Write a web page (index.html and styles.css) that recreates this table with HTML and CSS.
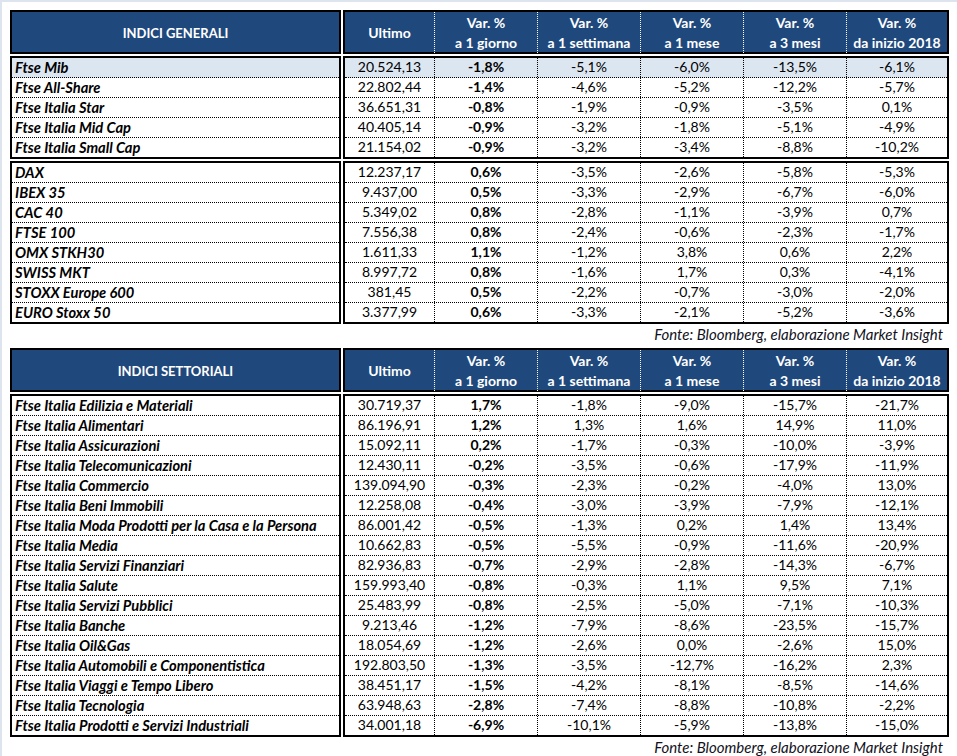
FILE: index.html
```html
<!DOCTYPE html>
<html lang="it">
<head>
<meta charset="utf-8">
<title>Indici</title>
<link rel="stylesheet" href="styles.css">
</head>
<body>
<div class="page">
  <section class="tbl">
    <div class="band hdr">
      <div class="box lab-h">INDICI GENERALI</div>
      <div class="box dat-h">
        <div class="hc one">Ultimo</div>
        <div class="hc">Var. %<br>a 1 giorno</div>
        <div class="hc">Var. %<br>a 1 settimana</div>
        <div class="hc">Var. %<br>a 1 mese</div>
        <div class="hc">Var. %<br>a 3 mesi</div>
        <div class="hc">Var. %<br>da inizio 2018</div>
      </div>
    </div>
    <div class="band">
      <div class="box lab">
        <div class="l hi">Ftse Mib</div>
        <div class="l">Ftse All-Share</div>
        <div class="l">Ftse Italia Star</div>
        <div class="l">Ftse Italia Mid Cap</div>
        <div class="l">Ftse Italia Small Cap</div>
      </div>
      <div class="box dat">
        <div class="r hi"><span>20.524,13</span><b>-1,8%</b><span>-5,1%</span><span>-6,0%</span><span>-13,5%</span><span>-6,1%</span></div>
        <div class="r"><span>22.802,44</span><b>-1,4%</b><span>-4,6%</span><span>-5,2%</span><span>-12,2%</span><span>-5,7%</span></div>
        <div class="r"><span>36.651,31</span><b>-0,8%</b><span>-1,9%</span><span>-0,9%</span><span>-3,5%</span><span>0,1%</span></div>
        <div class="r"><span>40.405,14</span><b>-0,9%</b><span>-3,2%</span><span>-1,8%</span><span>-5,1%</span><span>-4,9%</span></div>
        <div class="r"><span>21.154,02</span><b>-0,9%</b><span>-3,2%</span><span>-3,4%</span><span>-8,8%</span><span>-10,2%</span></div>
      </div>
    </div>
    <div class="band">
      <div class="box lab">
        <div class="l">DAX</div>
        <div class="l">IBEX 35</div>
        <div class="l">CAC 40</div>
        <div class="l">FTSE 100</div>
        <div class="l">OMX STKH30</div>
        <div class="l">SWISS MKT</div>
        <div class="l">STOXX Europe 600</div>
        <div class="l">EURO Stoxx 50</div>
      </div>
      <div class="box dat">
        <div class="r"><span>12.237,17</span><b>0,6%</b><span>-3,5%</span><span>-2,6%</span><span>-5,8%</span><span>-5,3%</span></div>
        <div class="r"><span>9.437,00</span><b>0,5%</b><span>-3,3%</span><span>-2,9%</span><span>-6,7%</span><span>-6,0%</span></div>
        <div class="r"><span>5.349,02</span><b>0,8%</b><span>-2,8%</span><span>-1,1%</span><span>-3,9%</span><span>0,7%</span></div>
        <div class="r"><span>7.556,38</span><b>0,8%</b><span>-2,4%</span><span>-0,6%</span><span>-2,3%</span><span>-1,7%</span></div>
        <div class="r"><span>1.611,33</span><b>1,1%</b><span>-1,2%</span><span>3,8%</span><span>0,6%</span><span>2,2%</span></div>
        <div class="r"><span>8.997,72</span><b>0,8%</b><span>-1,6%</span><span>1,7%</span><span>0,3%</span><span>-4,1%</span></div>
        <div class="r"><span>381,45</span><b>0,5%</b><span>-2,2%</span><span>-0,7%</span><span>-3,0%</span><span>-2,0%</span></div>
        <div class="r"><span>3.377,99</span><b>0,6%</b><span>-3,3%</span><span>-2,1%</span><span>-5,2%</span><span>-3,6%</span></div>
      </div>
    </div>
    <div class="fonte">Fonte: Bloomberg, elaborazione Market Insight</div>
  </section>

  <section class="tbl">
    <div class="band hdr">
      <div class="box lab-h">INDICI SETTORIALI</div>
      <div class="box dat-h">
        <div class="hc one">Ultimo</div>
        <div class="hc">Var. %<br>a 1 giorno</div>
        <div class="hc">Var. %<br>a 1 settimana</div>
        <div class="hc">Var. %<br>a 1 mese</div>
        <div class="hc">Var. %<br>a 3 mesi</div>
        <div class="hc">Var. %<br>da inizio 2018</div>
      </div>
    </div>
    <div class="band">
      <div class="box lab">
        <div class="l">Ftse Italia Edilizia e Materiali</div>
        <div class="l">Ftse Italia Alimentari</div>
        <div class="l">Ftse Italia Assicurazioni</div>
        <div class="l">Ftse Italia Telecomunicazioni</div>
        <div class="l">Ftse Italia Commercio</div>
        <div class="l">Ftse Italia Beni Immobili</div>
        <div class="l">Ftse Italia Moda Prodotti per la Casa e la Persona</div>
        <div class="l">Ftse Italia Media</div>
        <div class="l">Ftse Italia Servizi Finanziari</div>
        <div class="l">Ftse Italia Salute</div>
        <div class="l">Ftse Italia Servizi Pubblici</div>
        <div class="l">Ftse Italia Banche</div>
        <div class="l">Ftse Italia Oil&amp;Gas</div>
        <div class="l">Ftse Italia Automobili e Componentistica</div>
        <div class="l">Ftse Italia Viaggi e Tempo Libero</div>
        <div class="l">Ftse Italia Tecnologia</div>
        <div class="l">Ftse Italia Prodotti e Servizi Industriali</div>
      </div>
      <div class="box dat">
        <div class="r"><span>30.719,37</span><b>1,7%</b><span>-1,8%</span><span>-9,0%</span><span>-15,7%</span><span>-21,7%</span></div>
        <div class="r"><span>86.196,91</span><b>1,2%</b><span>1,3%</span><span>1,6%</span><span>14,9%</span><span>11,0%</span></div>
        <div class="r"><span>15.092,11</span><b>0,2%</b><span>-1,7%</span><span>-0,3%</span><span>-10,0%</span><span>-3,9%</span></div>
        <div class="r"><span>12.430,11</span><b>-0,2%</b><span>-3,5%</span><span>-0,6%</span><span>-17,9%</span><span>-11,9%</span></div>
        <div class="r"><span>139.094,90</span><b>-0,3%</b><span>-2,3%</span><span>-0,2%</span><span>-4,0%</span><span>13,0%</span></div>
        <div class="r"><span>12.258,08</span><b>-0,4%</b><span>-3,0%</span><span>-3,9%</span><span>-7,9%</span><span>-12,1%</span></div>
        <div class="r"><span>86.001,42</span><b>-0,5%</b><span>-1,3%</span><span>0,2%</span><span>1,4%</span><span>13,4%</span></div>
        <div class="r"><span>10.662,83</span><b>-0,5%</b><span>-5,5%</span><span>-0,9%</span><span>-11,6%</span><span>-20,9%</span></div>
        <div class="r"><span>82.936,83</span><b>-0,7%</b><span>-2,9%</span><span>-2,8%</span><span>-14,3%</span><span>-6,7%</span></div>
        <div class="r"><span>159.993,40</span><b>-0,8%</b><span>-0,3%</span><span>1,1%</span><span>9,5%</span><span>7,1%</span></div>
        <div class="r"><span>25.483,99</span><b>-0,8%</b><span>-2,5%</span><span>-5,0%</span><span>-7,1%</span><span>-10,3%</span></div>
        <div class="r"><span>9.213,46</span><b>-1,2%</b><span>-7,9%</span><span>-8,6%</span><span>-23,5%</span><span>-15,7%</span></div>
        <div class="r"><span>18.054,69</span><b>-1,2%</b><span>-2,6%</span><span>0,0%</span><span>-2,6%</span><span>15,0%</span></div>
        <div class="r"><span>192.803,50</span><b>-1,3%</b><span>-3,5%</span><span>-12,7%</span><span>-16,2%</span><span>2,3%</span></div>
        <div class="r"><span>38.451,17</span><b>-1,5%</b><span>-4,2%</span><span>-8,1%</span><span>-8,5%</span><span>-14,6%</span></div>
        <div class="r"><span>63.948,63</span><b>-2,8%</b><span>-7,4%</span><span>-8,8%</span><span>-10,8%</span><span>-2,2%</span></div>
        <div class="r"><span>34.001,18</span><b>-6,9%</b><span>-10,1%</span><span>-5,9%</span><span>-13,8%</span><span>-15,0%</span></div>
      </div>
    </div>
    <div class="fonte">Fonte: Bloomberg, elaborazione Market Insight</div>
  </section>
</div>
</body>
</html>
```

FILE: styles.css
```css
* { box-sizing: border-box; }

html, body {
  margin: 0;
  padding: 0;
  background: #ffffff;
}

body {
  font-family: Lato, "Liberation Sans", Arial, sans-serif;
  font-size: 14px;
  color: #000000;
}

.page {
  width: 957px;
  height: 756px;
  overflow: hidden;
  border-top: 2px solid #dde4ee;
  border-left: 2px solid #dde4ee;
  padding: 8px 0 0 8px;
}

.tbl {
  width: 939px;
}

.band {
  display: grid;
  grid-template-columns: 331px 606px;
  column-gap: 2px;
  margin-bottom: 2px;
}

.box {
  border: 2px solid #000000;
}

.hdr .box {
  background: #1f497d;
  color: #ffffff;
  font-weight: bold;
  height: 44px;
}

.lab-h {
  display: flex;
  align-items: center;
  justify-content: center;
  font-size: 13px;
  padding-top: 1px;
}

.dat-h {
  display: grid;
  grid-template-columns: 90px 103px 103px 103px 103px 1fr;
}

.hc {
  text-align: center;
  line-height: 20px;
  padding-top: 1px;
  border-right: 1px dotted #ffffff;
}

.hc:last-child {
  border-right: 0;
}

.hc.one {
  display: flex;
  align-items: center;
  justify-content: center;
}

.l {
  height: 20px;
  line-height: 18px;
  border-bottom: 1px dotted #000000;
  padding-left: 3px;
  font-size: 14.7px;
  font-weight: bold;
  font-style: italic;
  white-space: nowrap;
}

.l:last-child,
.r:last-child {
  border-bottom: 0;
  height: 19px;
}

.r {
  display: grid;
  grid-template-columns: 90px 103px 103px 103px 103px 1fr;
  height: 20px;
  line-height: 18px;
  border-bottom: 1px dotted #000000;
}

.r > * {
  text-align: center;
  border-right: 1px dotted #000000;
  white-space: nowrap;
}

.r > *:last-child {
  border-right: 0;
}

.r > b {
  font-weight: bold;
}

.hi {
  background: #dce6f1;
}

.fonte {
  height: 22px;
  text-align: right;
  padding-right: 6px;
  font-size: 15px;
  font-style: italic;
  line-height: 16px;
  color: #111122;
}
```
